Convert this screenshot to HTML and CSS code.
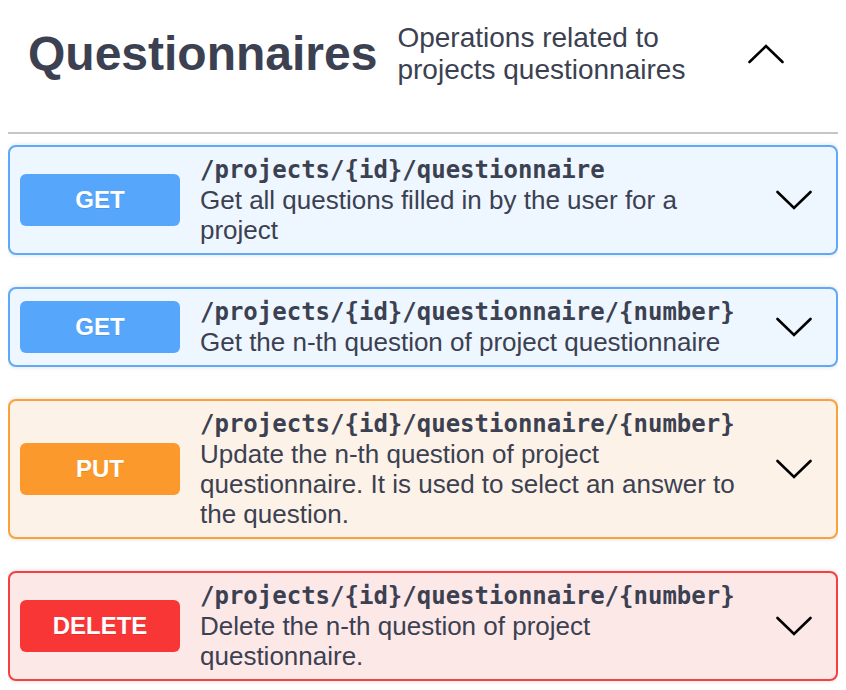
FILE: index.html
```html
<!DOCTYPE html>
<html lang="en">
<head>
<meta charset="utf-8">
<title>Questionnaires</title>
<link rel="stylesheet" href="styles.css">
</head>
<body>
<section class="tag-section">
  <header class="tag-header">
    <h3 class="tag-title">Questionnaires</h3>
    <p class="tag-desc">Operations related to projects questionnaires</p>
    <span class="tag-toggle">
      <svg width="36" height="20" viewBox="0 0 36 20"><polyline points="1.5,18 18,2 34.5,18" fill="none" stroke="#000" stroke-width="2.6" stroke-linecap="round" stroke-linejoin="miter"/></svg>
    </span>
  </header>

  <div class="opblock opblock-get">
    <div class="summary">
      <span class="method">GET</span>
      <div class="info">
        <div class="path">/projects/{id}/questionnaire</div>
        <div class="desc">Get all questions filled in by the user for a project</div>
      </div>
      <span class="arrow"><svg width="36" height="20" viewBox="0 0 36 20"><polyline points="1.5,2 18,18 34.5,2" fill="none" stroke="#000" stroke-width="2.6" stroke-linecap="round"/></svg></span>
    </div>
  </div>

  <div class="opblock opblock-get">
    <div class="summary">
      <span class="method">GET</span>
      <div class="info">
        <div class="path">/projects/{id}/questionnaire/{number}</div>
        <div class="desc">Get the n-th question of project questionnaire</div>
      </div>
      <span class="arrow"><svg width="36" height="20" viewBox="0 0 36 20"><polyline points="1.5,2 18,18 34.5,2" fill="none" stroke="#000" stroke-width="2.6" stroke-linecap="round"/></svg></span>
    </div>
  </div>

  <div class="opblock opblock-put">
    <div class="summary">
      <span class="method">PUT</span>
      <div class="info">
        <div class="path">/projects/{id}/questionnaire/{number}</div>
        <div class="desc">Update the n-th question of project questionnaire. It is used to select an answer to the question.</div>
      </div>
      <span class="arrow"><svg width="36" height="20" viewBox="0 0 36 20"><polyline points="1.5,2 18,18 34.5,2" fill="none" stroke="#000" stroke-width="2.6" stroke-linecap="round"/></svg></span>
    </div>
  </div>

  <div class="opblock opblock-delete">
    <div class="summary">
      <span class="method">DELETE</span>
      <div class="info">
        <div class="path">/projects/{id}/questionnaire/{number}</div>
        <div class="desc">Delete the n-th question of project questionnaire.</div>
      </div>
      <span class="arrow"><svg width="36" height="20" viewBox="0 0 36 20"><polyline points="1.5,2 18,18 34.5,2" fill="none" stroke="#000" stroke-width="2.6" stroke-linecap="round"/></svg></span>
    </div>
  </div>
</section>
</body>
</html>
```

FILE: styles.css
```css
* { box-sizing: border-box; }

body {
  margin: 8px;
  background: #fff;
  color: #3b4151;
  font-family: "Liberation Sans", Arial, Helvetica, sans-serif;
}

.tag-header {
  display: flex;
  align-items: center;
  padding: 14px 20px 46px 20px;
  border-bottom: 2px solid rgba(59, 65, 81, 0.3);
}

.tag-title {
  margin: 0;
  font-size: 48px;
  line-height: 48px;
  font-weight: bold;
  color: #3b4151;
}

.tag-desc {
  margin: 0 0 0 20px;
  width: 310px;
  font-size: 28px;
  line-height: 32px;
  color: #3b4151;
}

.tag-toggle {
  display: flex;
  margin-left: auto;
  margin-right: 34px;
}

.opblock {
  border: 2px solid #61affe;
  border-radius: 8px;
  margin: 0 0 32px 0;
  box-shadow: 0 0 5px rgba(0, 0, 0, 0.14);
}

.tag-header + .opblock { margin-top: 11px; }

.opblock-get { background: #eef6ff; border-color: #5fa9f8; }
.opblock-put { background: #fdf2e8; border-color: #f9a23c; }
.opblock-delete { background: #fde8e8; border-color: #f64040; }

.summary {
  display: flex;
  align-items: center;
  padding: 8px 10px;
}

.method {
  flex: 0 0 160px;
  width: 160px;
  padding: 12px 0;
  line-height: 28px;
  font-size: 24px;
  font-weight: bold;
  text-align: center;
  color: #fff;
  border-radius: 6px;
  text-shadow: 0 1px 0 rgba(0, 0, 0, 0.1);
}

.opblock-get .method { background: #56a6fc; }
.opblock-put .method { background: #fb992c; }
.opblock-delete .method { background: #f93636; }

.info {
  flex: 1 1 auto;
  min-width: 0;
  margin-left: 20px;
}

.path {
  font-family: "DejaVu Sans Mono", "Liberation Mono", monospace;
  font-weight: bold;
  font-size: 24px;
  line-height: 30px;
  color: #3b4151;
}

.desc {
  font-size: 26px;
  line-height: 30px;
  color: #3b4151;
}

.arrow {
  display: flex;
  flex: 0 0 auto;
  padding: 0 14px 0 20px;
}
```
